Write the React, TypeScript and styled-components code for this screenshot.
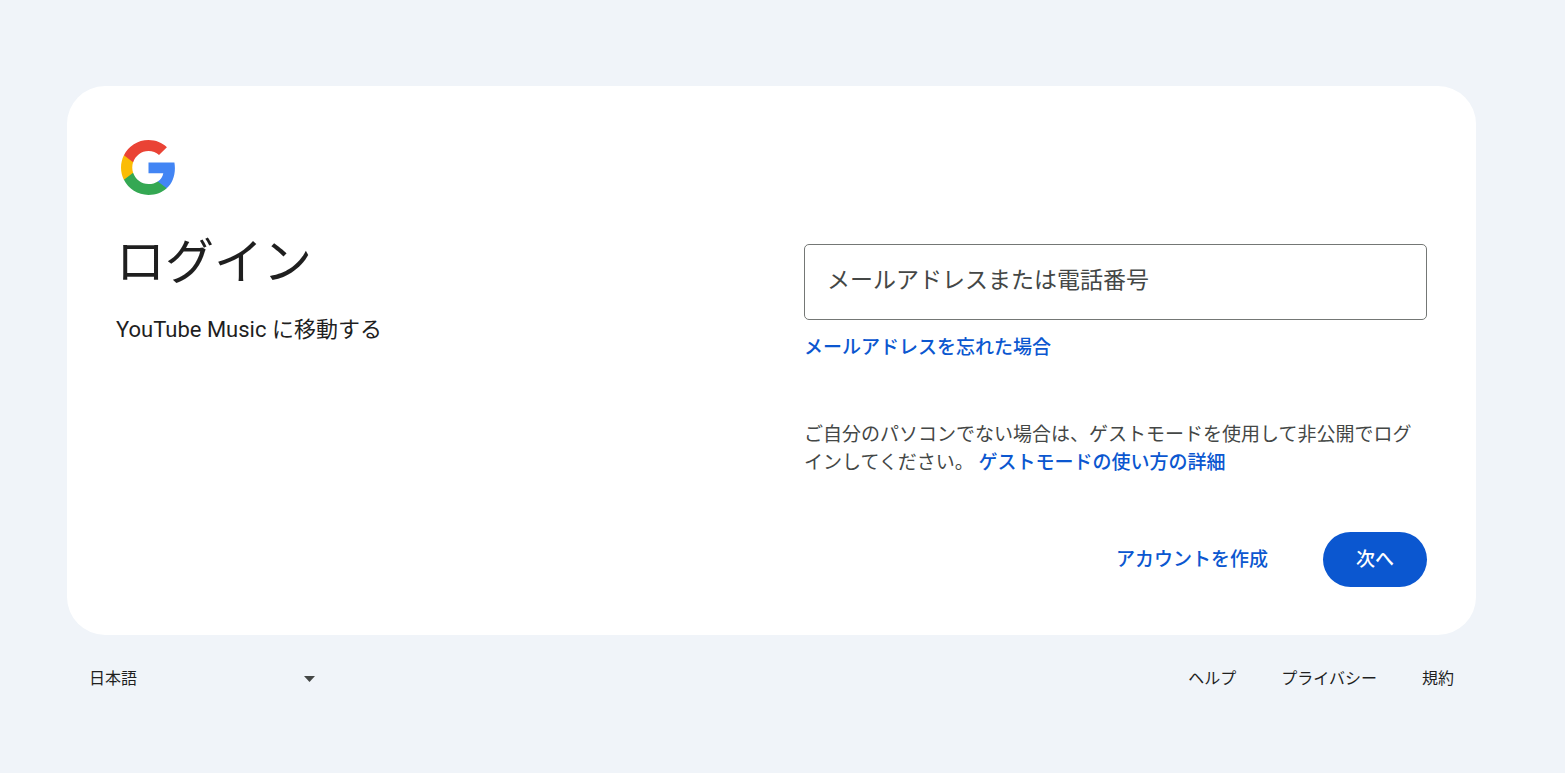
import React from 'react';
import styled, { createGlobalStyle } from 'styled-components';

const GlobalStyle = createGlobalStyle`
  *, *::before, *::after { box-sizing: border-box; }
  body {
    margin: 0;
    background: #f0f4f9;
    color: #1f1f1f;
    font-family: Roboto, 'Noto Sans CJK JP', sans-serif;
  }
`;

const Page = styled.div`
  min-height: 100vh;
  padding: 86px 89px 48px 67px;
`;

const Card = styled.main`
  display: grid;
  grid-template-columns: 1fr 1fr;
  column-gap: 65px;
  padding: 49px 49px 48px;
  background: #fff;
  border-radius: 38px;
`;

const Intro = styled.header`
  display: flex;
  flex-direction: column;
  align-items: flex-start;
`;

const Logo = styled.svg`
  display: block;
  width: 65px;
  height: 65px;
`;

const Title = styled.h1`
  margin: 33px 0 0;
  font-size: 49px;
  line-height: 60px;
  font-weight: 400;
`;

const Subtitle = styled.p`
  margin: 21px 0 0;
  font-size: 22px;
  line-height: 32px;
`;

const Form = styled.form`
  display: flex;
  flex-direction: column;
  padding-top: 109px;
`;

const EmailInput = styled.input`
  width: 100%;
  height: 76px;
  padding: 0 22px 4px;
  border: 1px solid #747775;
  border-radius: 5px;
  background: #fff;
  color: #1f1f1f;
  font: 400 23px/32px Roboto, 'Noto Sans CJK JP', sans-serif;
  &::placeholder { color: #444746; opacity: 1; }
`;

const TextLink = styled.a`
  color: #0b57d0;
  font-size: 19px;
  line-height: 28px;
  font-weight: 500;
  text-decoration: none;
`;

const ForgotRow = styled.div`
  display: flex;
  margin-top: 14px;
`;

const Notice = styled.p`
  margin: 59px 0 0;
  color: #444746;
  font-size: 19px;
  line-height: 28px;
`;

const Actions = styled.div`
  display: flex;
  justify-content: flex-end;
  align-items: center;
  gap: 55px;
  margin-top: 55px;
`;

const NextButton = styled.button`
  width: 104px;
  height: 55px;
  padding: 0;
  border: 0;
  border-radius: 28px;
  background: #0b57d0;
  color: #fff;
  font: 500 19px/28px Roboto, 'Noto Sans CJK JP', sans-serif;
  cursor: pointer;
`;

const Footer = styled.footer`
  display: flex;
  justify-content: space-between;
  align-items: center;
  padding: 32px 22px 0;
  font-size: 16px;
  line-height: 24px;
`;

const LanguagePicker = styled.div`
  display: grid;
  grid-template-columns: 226px;
  align-items: center;
  > * { grid-area: 1 / 1; }
`;

const LanguageSelect = styled.select`
  width: 100%;
  height: 24px;
  padding: 0;
  border: 0;
  appearance: none;
  background: transparent;
  color: #1f1f1f;
  font: 400 16px/24px Roboto, 'Noto Sans CJK JP', sans-serif;
`;

const Arrow = styled.svg`
  justify-self: end;
  width: 11px;
  height: 6px;
  pointer-events: none;
`;

const FooterNav = styled.nav`
  display: flex;
  gap: 45px;
`;

const FooterLink = styled.a`
  color: #1f1f1f;
  text-decoration: none;
`;

export default function App() {
  return (
    <>
      <GlobalStyle />
      <Page lang="ja">
        <Card>
          <Intro>
            <Logo viewBox="-2 -2 52 52" role="img" aria-label="Google">
              <path fill="#4285F4" d="M45.12 24.5c0-1.56-.14-3.06-.4-4.5H24v8.51h11.84c-.51 2.75-2.06 5.08-4.39 6.64v5.52h7.11c4.16-3.83 6.56-9.47 6.56-16.17z" />
              <path fill="#34A853" d="M24 46c5.94 0 10.92-1.97 14.56-5.33l-7.11-5.52c-1.97 1.32-4.49 2.1-7.45 2.1-5.73 0-10.58-3.87-12.31-9.07H4.34v5.7C7.96 41.07 15.4 46 24 46z" />
              <path fill="#FBBC05" d="M11.69 28.18C11.25 26.86 11 25.45 11 24s.25-2.86.69-4.18v-5.7H4.34C2.85 17.09 2 20.45 2 24s.85 6.91 2.34 9.88l7.35-5.7z" />
              <path fill="#EA4335" d="M24 10.75c3.23 0 6.13 1.11 8.41 3.29l6.31-6.31C34.91 4.18 29.93 2 24 2 15.4 2 7.96 6.93 4.34 14.12l7.35 5.7c1.73-5.2 6.58-9.07 12.31-9.07z" />
            </Logo>
            <Title>ログイン</Title>
            <Subtitle>YouTube Music に移動する</Subtitle>
          </Intro>
          <Form onSubmit={(event) => event.preventDefault()}>
            <EmailInput
              type="text"
              aria-label="メールアドレスまたは電話番号"
              placeholder="メールアドレスまたは電話番号"
            />
            <ForgotRow>
              <TextLink href="#forgot">メールアドレスを忘れた場合</TextLink>
            </ForgotRow>
            <Notice>
              ご自分のパソコンでない場合は、ゲストモードを使用して非公開でログインしてください。{' '}
              <TextLink href="#guest">ゲストモードの使い方の詳細</TextLink>
            </Notice>
            <Actions>
              <TextLink href="#create">アカウントを作成</TextLink>
              <NextButton type="submit">次へ</NextButton>
            </Actions>
          </Form>
        </Card>
        <Footer>
          <LanguagePicker>
            <LanguageSelect aria-label="言語" defaultValue="ja">
              <option value="ja">日本語</option>
            </LanguageSelect>
            <Arrow viewBox="0 0 11 6" aria-hidden="true">
              <path fill="#444746" d="M0 0h11L5.5 6z" />
            </Arrow>
          </LanguagePicker>
          <FooterNav>
            <FooterLink href="#help">ヘルプ</FooterLink>
            <FooterLink href="#privacy">プライバシー</FooterLink>
            <FooterLink href="#terms">規約</FooterLink>
          </FooterNav>
        </Footer>
      </Page>
    </>
  );
}
